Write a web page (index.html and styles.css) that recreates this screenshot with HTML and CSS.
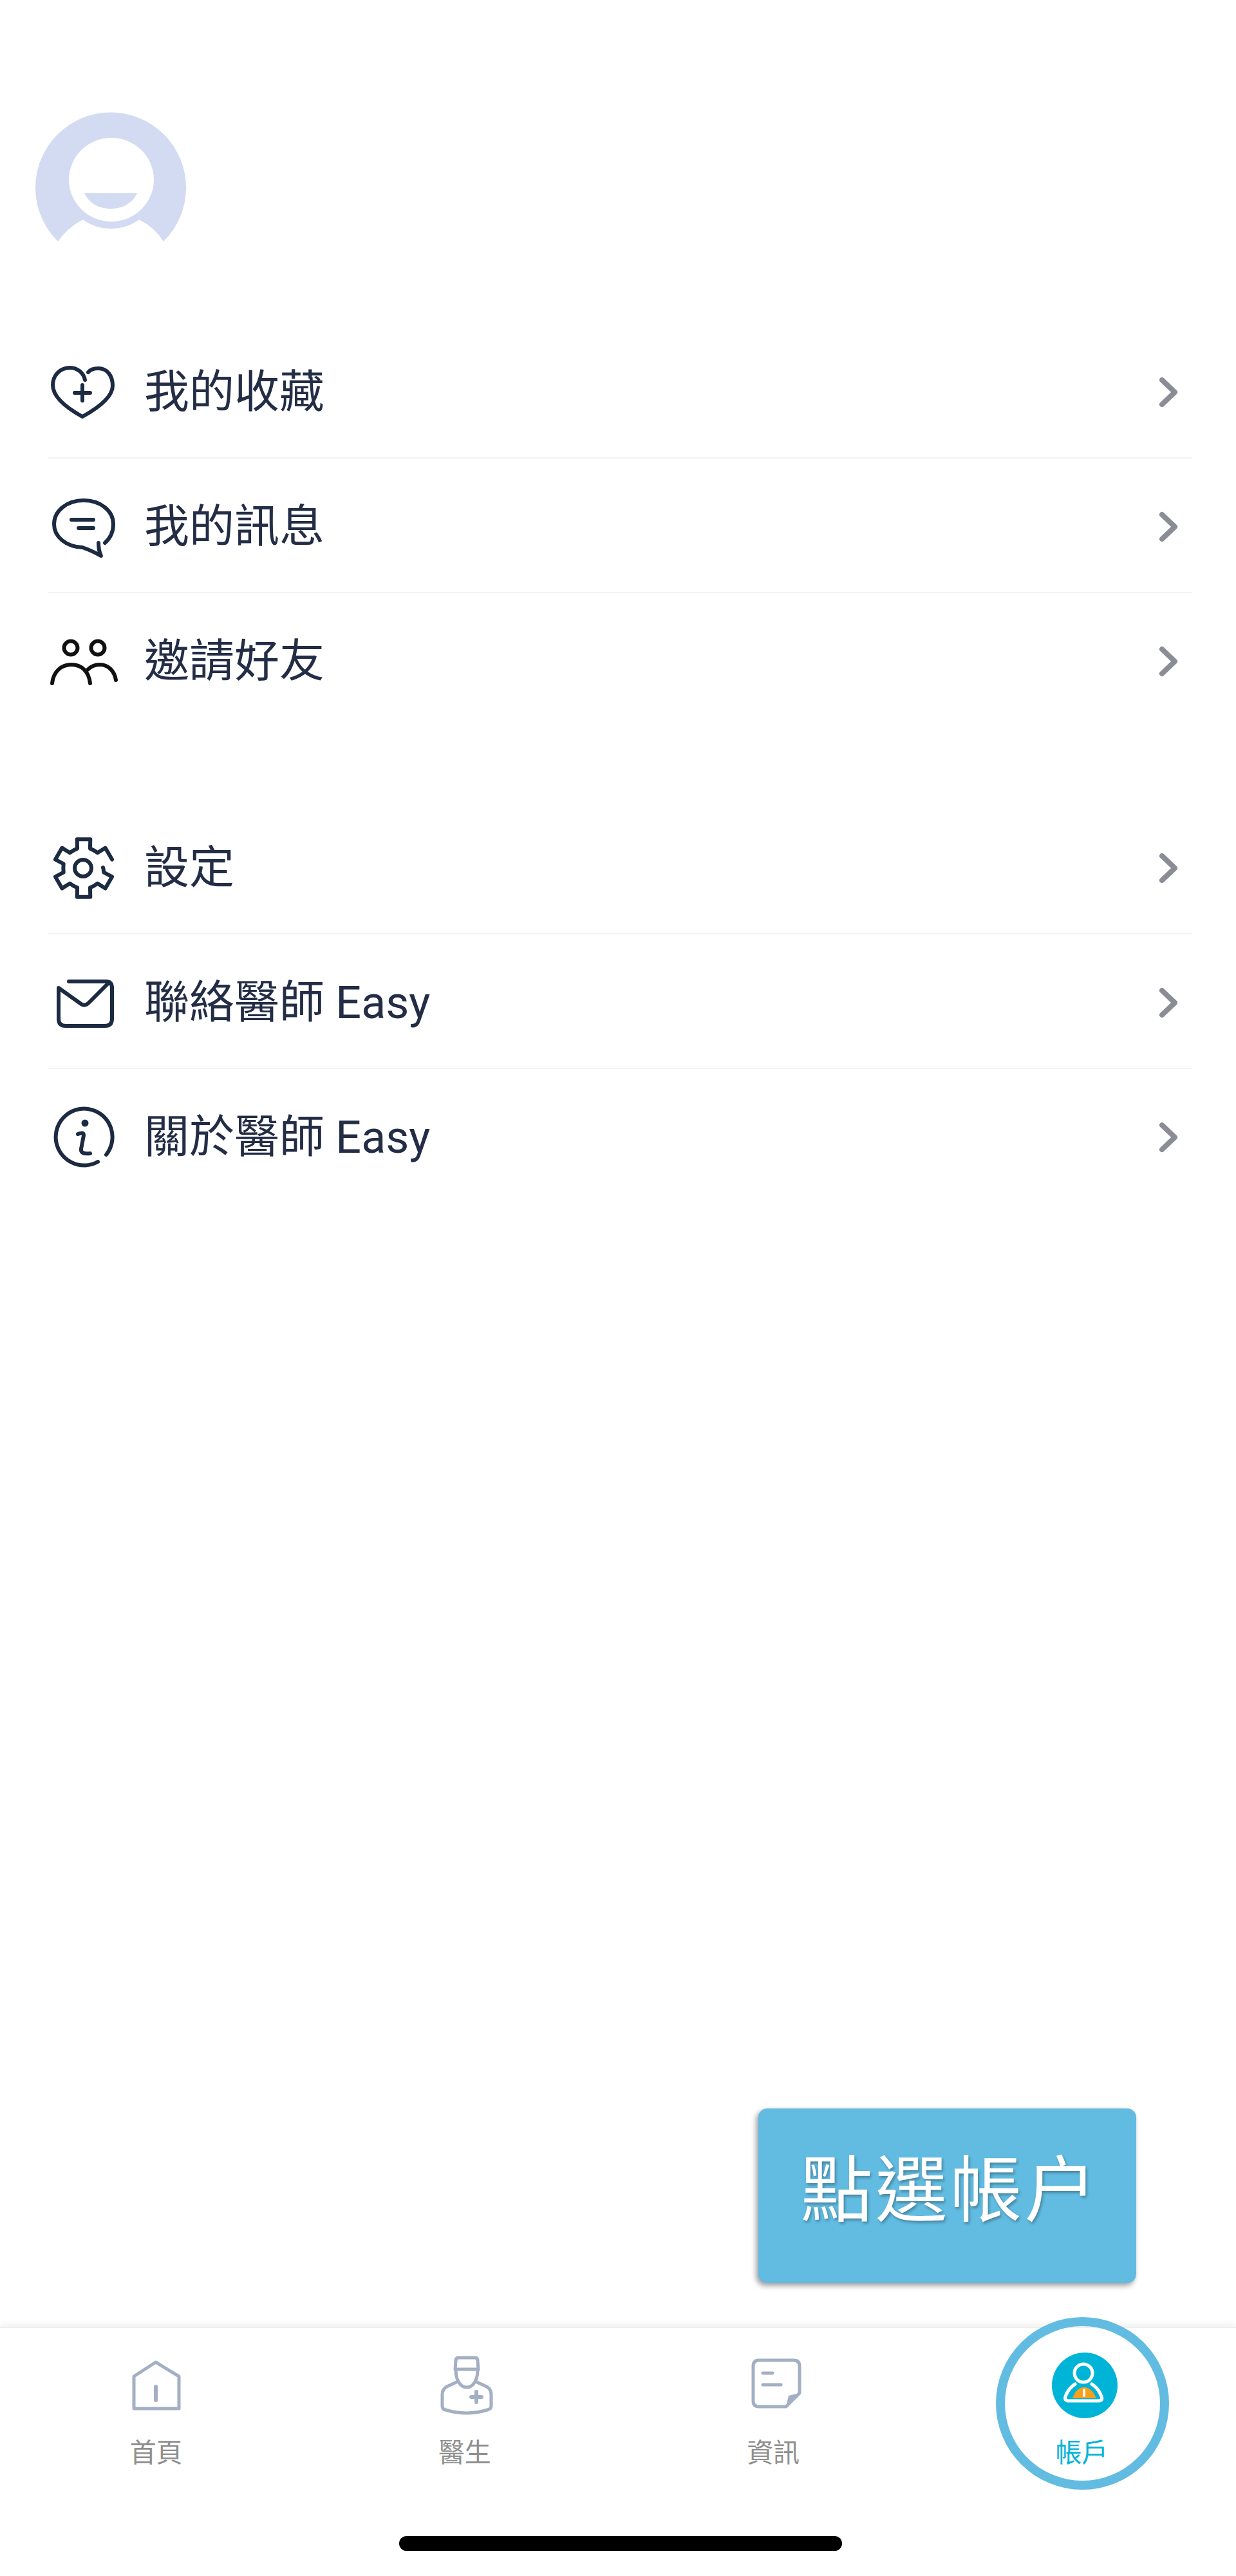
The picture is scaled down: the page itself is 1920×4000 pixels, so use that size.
FILE: index.html
```html
<!DOCTYPE html>
<html lang="zh-Hant">
<head>
<meta charset="utf-8">
<title>帳戶</title>
<link rel="stylesheet" href="styles.css">
</head>
<body>
<div class="page">
<div class="avatar">
<svg width="234" height="234" viewBox="0 0 234 234">
<path class="avatar-fill" d="M35 198 A117 117 0 1 1 199 198 Q185 176 161 164 Q142 178 117 178 Q93 178 74 164 Q50 176 35 198Z"/>
<ellipse cx="118" cy="102" rx="66" ry="65" fill="#fff"/>
<path class="avatar-fill" d="M76 123 H158 C150 140 134 147 117 147 C100 147 84 140 76 123Z"/>
</svg>
</div>

<div class="group">
<div class="row">
<svg class="icon" viewBox="0 0 100 100"><path d="M52 31 C50 20 40 12 29 12 C13 12 2 24 2 39 C2 60 30 78 48 88 C66 78 95 60 95 40 C95 24 86 13 73 13 C66 13 60 15 57 19"/><path d="M48 39 V63 M36 51 H60"/></svg>
<span class="label">我的收藏</span>
<svg class="chevron" viewBox="0 0 32 48"><path d="M6 5 L26 24 L6 43"/></svg>
</div>
<div class="row">
<svg class="icon" viewBox="0 0 100 100"><path d="M83 75 C92 67 96 57 96 46 C96 25 76 9 50 9 C24 9 4 25 4 46 C4 65 22 81 48 82 Q60 86 77 95 C74 89 73 82 73 75"/><path d="M31 39 H65 M42 52 H65"/></svg>
<span class="label">我的訊息</span>
<svg class="chevron" viewBox="0 0 32 48"><path d="M6 5 L26 24 L6 43"/></svg>
</div>
<div class="row">
<svg class="icon icon-dark" viewBox="0 0 100 100"><circle cx="30" cy="29" r="10.5"/><circle cx="72" cy="29" r="10.5"/><path d="M1 84 C3 65 16 55 31 55 C46 55 58 65 60 84"/><path d="M56 63 C61 58 68 55 75 55 C88 55 98 65 100 79"/></svg>
<span class="label">邀請好友</span>
<svg class="chevron" viewBox="0 0 32 48"><path d="M6 5 L26 24 L6 43"/></svg>
</div>
</div>

<div class="group">
<div class="row">
<svg class="icon" viewBox="0 0 100 100"><path d="M80 49 C81 52 81 54 81.3 56.7 L94 63.4 L83.6 81.4 L71.4 73.8 Q66 78 59.9 80.4 L60.3 94.8 L39.7 94.8 L40.1 80.4 Q34 78 28.6 73.8 L16.4 81.4 L6 63.4 L18.7 56.7 Q18 50 18.7 43.3 L6 36.6 L16.4 18.6 L28.6 26.2 Q34 22 40.1 19.6 L39.7 5.2 L60.3 5.2 L59.9 19.6 Q66 22 71.4 26.2 L83.6 18.6 L94 36.6"/><circle cx="49" cy="50" r="13"/></svg>
<span class="label">設定</span>
<svg class="chevron" viewBox="0 0 32 48"><path d="M6 5 L26 24 L6 43"/></svg>
</div>
<div class="row">
<svg class="icon" viewBox="0 0 100 100"><path d="M27 17 H84 Q94 17 94 27 V75 Q94 86 83 86 H22 Q11 86 11 75 V27 L46 52 Q52 56 58 50 L90 18"/></svg>
<span class="label">聯絡醫師 Easy</span>
<svg class="chevron" viewBox="0 0 32 48"><path d="M6 5 L26 24 L6 43"/></svg>
</div>
<div class="row">
<svg class="icon" viewBox="0 0 100 100"><path d="M72 88 A44 44 0 1 1 85 77"/><path d="M41 45 Q50 41 50 47 L46 68 Q45 77 60 75"/><circle class="dot" cx="52" cy="28" r="5.5"/></svg>
<span class="label">關於醫師 Easy</span>
<svg class="chevron" viewBox="0 0 32 48"><path d="M6 5 L26 24 L6 43"/></svg>
</div>
</div>

<div class="tip">點選帳户</div>

<div class="tabbar">
<div class="tabs">
<div class="tab">
<svg class="tab-icon" viewBox="0 0 100 100"><path d="M49 14 L15 36 V86 H85 V36 Z"/><path class="thick" d="M49 52 V73"/></svg>
<span>首頁</span>
</div>
<div class="tab">
<svg class="tab-icon" viewBox="0 0 100 100"><path d="M40 7 H66 Q70 7 70 12 L71 25 H35 L36 12 Q36 7 40 7Z"/><path d="M36 26 C36 40 42 53 53 53 C64 53 70 40 70 26"/><path d="M37 45 L22 52 Q15 56 15 64 V82 Q15 87 20 88 Q53 98 85 88 Q91 87 91 82 V64 Q91 56 84 52 L69 45"/><path class="thick" d="M68 60 V76 M60 68 H76"/></svg>
<span>醫生</span>
</div>
<div class="tab">
<svg class="tab-icon" viewBox="0 0 100 100"><path d="M28 11 H82 Q91 11 91 20 V62 L70 83 H28 Q19 83 19 74 V20 Q19 11 28 11Z"/><path class="corner" d="M91 62 L74 66 L70 83Z"/><path d="M34 31 H49 M34 49 H62"/></svg>
<span>資訊</span>
</div>
<div class="tab tab-active">
<svg class="tab-icon" viewBox="0 0 120 100">
<circle cx="65" cy="50" r="51" fill="#00b4d8" stroke="none"/>
<circle cx="63" cy="31" r="14" fill="none" stroke="#fff" stroke-width="5"/>
<path d="M50 48 Q40 54 35 67 Q33 74 40 74 H86 Q94 74 91 67 Q86 54 76 48" fill="none" stroke="#fff" stroke-width="5"/>
<path d="M46 70 Q52 53 64 53 Q76 53 83 70Z" fill="#f5a01e" stroke="none"/>
<path d="M64 57 V66" stroke="#fff" stroke-width="4"/>
</svg>
<span>帳戶</span>
</div>
</div>
<div class="home-bar"></div>
</div>

<div class="ring"></div>
</div>
</body>
</html>
```

FILE: styles.css
```css
* {
box-sizing: border-box;
}
body {
margin: 0;
background: #fff;
font-family: Roboto, "Noto Sans CJK TC", sans-serif;
}
.page {
position: relative;
width: 1920px;
height: 4000px;
display: flex;
flex-direction: column;
overflow: hidden;
}
.avatar {
padding: 177px 0 0 55px;
margin-bottom: 92px;
}
.avatar svg {
display: block;
overflow: visible;
}
.avatar-fill {
fill: #d3dbf3;
}
.group {
margin: 0 68px 112px 74px;
}
.row {
height: 209px;
display: flex;
align-items: center;
padding: 4px 21px 0 6px;
border-bottom: 2px solid #f3f3f3;
}
.group .row:last-child {
border-bottom-color: transparent;
}
.icon {
width: 100px;
height: 100px;
flex: none;
overflow: visible;
fill: none;
stroke: #1c2a42;
stroke-width: 6;
stroke-linecap: round;
stroke-linejoin: round;
}
.icon-dark {
stroke: #111;
}
.icon .dot {
fill: #1c2a42;
stroke: none;
}
.label {
margin-left: 44px;
flex: 1;
font-size: 70px;
line-height: 90px;
color: #232d45;
}
.chevron {
width: 32px;
height: 48px;
flex: none;
fill: none;
stroke: #8a8d96;
stroke-width: 8;
stroke-linecap: round;
stroke-linejoin: round;
}
.tip {
position: absolute;
left: 1178px;
top: 3274px;
width: 587px;
height: 271px;
padding: 54px 0 0 8px;
border-radius: 14px;
background: #62bce2;
box-shadow: -3px 4px 8px rgba(0, 0, 0, 0.4);
color: #fff;
font-size: 112px;
line-height: 150px;
letter-spacing: 4px;
text-align: center;
text-shadow: 2px 3px 4px rgba(0, 0, 0, 0.3);
}
.tabbar {
margin-top: auto;
height: 387px;
border-top: 2px solid #efefef;
box-shadow: 0 -5px 8px rgba(0, 0, 0, 0.05);
padding-top: 39px;
background: #fff;
}
.tabs {
display: flex;
padding-left: 3px;
}
.tab {
flex: 1;
display: flex;
flex-direction: column;
align-items: center;
font-size: 41px;
line-height: 60px;
color: #8f8f8f;
}
.tab span {
margin-top: 25px;
}
.tab-icon {
height: 100px;
width: 100px;
overflow: visible;
fill: none;
stroke: #a3afc2;
stroke-width: 5;
stroke-linecap: round;
stroke-linejoin: round;
}
.tab-icon .thick {
stroke-width: 6;
}
.tab-icon .corner {
fill: #a3afc2;
stroke: none;
}
.tab-active {
color: #00b4d8;
}
.tab-active .tab-icon {
width: 120px;
}
.home-bar {
width: 688px;
height: 23px;
margin: 99px auto 0;
position: relative;
left: 4px;
border-radius: 12px;
background: #000;
}
.ring {
position: absolute;
left: 1547px;
top: 3598px;
width: 269px;
height: 268px;
border: 14px solid #62bce2;
border-radius: 50%;
}
```
